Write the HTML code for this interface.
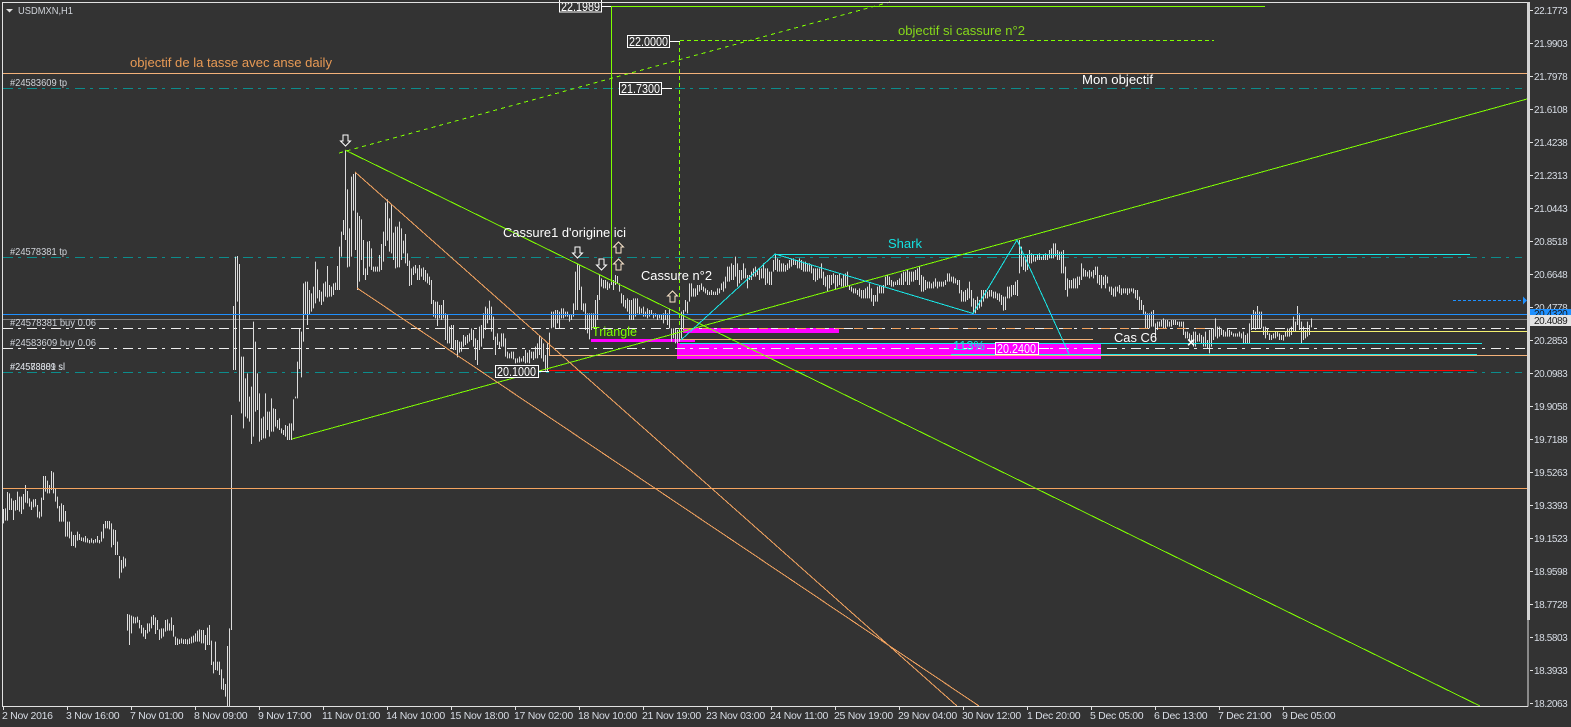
<!DOCTYPE html>
<html lang="fr"><head><meta charset="utf-8"><title>USDMXN,H1</title>
<style>
html,body{margin:0;padding:0;background:#333;width:1571px;height:727px;overflow:hidden}
svg{display:block;font-family:"Liberation Sans",sans-serif}
.a{font-size:10px;letter-spacing:-.4px;fill:#d8dde5}
.t{font-size:10.5px;letter-spacing:-.3px;fill:#d8dde5}
.l{font-size:10.5px;fill:#d0d4da}
.w{font-size:13px;fill:#fff}
</style></head><body>
<svg width="1571" height="727" viewBox="0 0 1571 727" xmlns="http://www.w3.org/2000/svg">
<defs>
<path id="d" d="M-2.5 0H2.5V6H5L0 11L-5 6H-2.5Z" fill="none" stroke-width="1"/>
<path id="u" d="M-2.5 11H2.5V5H5L0 0L-5 5H-2.5Z" fill="none" stroke-width="1"/>
</defs>
<rect width="1571" height="727" fill="#333"/>

<!-- horizontal levels under the bars -->
<g fill="none" shape-rendering="crispEdges">
<path d="M3 88.5H1522M3 257.5H1522M3 372.5H1522" stroke="#0c8c8c" stroke-dasharray="10 5 3 6"/>
<path d="M3 319.5H1527" stroke="#808080"/>
</g>

<!-- magenta rectangles -->
<g fill="#ff00ff" shape-rendering="crispEdges">
<rect x="683" y="328" width="156" height="5"/>
<rect x="591" y="339" width="104" height="3"/>
<rect x="677" y="343" width="424" height="16"/>
</g>

<!-- price bars -->
<g fill="none" stroke="#dcdcdc" stroke-width="1" shape-rendering="crispEdges">
<path transform="translate(.5 460) scale(1 .33333)" d="M3 147V190M5 145V182M7 96V182M9 100V150M11 115V150M13 122V180M15 120V152M17 95V150M19 110V155M21 110V162M23 102V148M25 75V128M27 93V130M29 115V140M31 125V150M33 118V142M35 117V140M37 135V172M39 155V175M41 113V170M43 48V120M45 48V95M47 62V100M49 75V100M51 33V90M53 37V100M55 85V125M57 110V145M59 138V185M61 130V185M63 135V185M65 153V230M67 185V230M69 185V235M71 215V258M73 225V258M75 225V263M77 215V242M79 222V240M81 232V243M83 233V245M85 228V247M87 235V248M89 240V250M91 235V248M93 240V250M95 237V248M97 228V248M99 240V250M101 215V245M103 192V235M105 183V205M107 183V205M109 183V208M111 190V262M113 208V255M115 210V285M117 245V285M119 288V355M121 300V338M123 290V325M125 295V320M127 462V512M129 464V555M131 467V520M133 470V490M135 472V490M137 470V488M139 480V505M141 495V520M143 503V530M145 510V537M147 490V520M149 490V515M151 470V505M153 465V495M155 472V522M157 480V510M159 508V540M161 505V535M163 505V530M165 480V515M167 478V512M169 490V512M171 472V512M173 495V530M175 530V555M177 535V555M179 538V552M181 535V550M183 538V552M185 537V552M187 538V553M189 535V552M191 530V550M193 527V548M195 520V545M197 512V545M199 508V545M201 510V550M203 510V550M205 525V570M207 503V555M209 495V555M211 542V615M213 605V640M215 545V630M217 605V632M219 605V645M221 628V688M223 655V690M225 672V710M227 558V740M229 505V740M231 -135V510"/>
<path transform="translate(.5 240) scale(1 .33333)" d="M233 198V390M235 50V390M237 48V185M239 72V485M241 350V520M243 350V565M245 415V530M247 400V535M249 470V545M251 440V612M253 245V590M255 305V515M257 400V510M259 460V605M261 535V600M263 530V595M265 460V595M267 515V570M269 515V590M271 475V575M273 505V575M275 507V560M277 540V565M279 535V570M281 565V580M283 570V585M285 555V590M287 558V600M289 550V600M291 550V600M293 478V572M295 470V475M297 365V475M299 265V387M301 275V412M303 130V305M305 125V225M307 125V255M309 150V225M311 160V215M313 140V205M315 65V190M317 88V175M319 150V185M321 155V195M323 130V185M325 125V170M327 78V172M329 135V170M331 140V170M333 130V165M335 128V150M337 78V150M339 20V150"/>
<path transform="translate(.5 160) scale(1 .33333)" d="M341 215V290M343 180V225M345 -30V240M347 88V322M349 205V320M351 50V290M353 42V152M355 37V270M357 158V390M359 168V365M361 178V300M363 240V345M365 325V360M367 245V345M369 243V320M371 265V330M373 320V335M375 320V335M377 320V335M379 285V335M381 252V330M383 215V305M385 128V258M387 118V242M389 175V275M391 132V280M393 218V300M395 200V325M397 200V322M399 185V322M401 205V300M403 242V280M405 222V310M407 280V318M409 302V378M411 325V375M413 320V345M415 315V340M417 325V360M419 315V360M421 325V350M423 322V360"/>
<path transform="translate(.5 170) scale(1 .33333)" d="M425 300V335M427 310V340M429 320V345M431 330V402M433 390V440M435 395V445M437 395V468M439 405V445M441 405V450M443 390V445M445 430V510M447 435V520M449 470V520M451 465V535M453 465V540M455 510V540M457 510V562M459 515V548M461 515V545M463 495V530M465 500V525M467 495V520M469 490V515M471 475V510M473 480V530M475 505V570M477 510V585M479 470V540M481 465V530M483 430V505M485 410V480M487 415V460M489 392V450M491 410V485M493 440V510M495 500V555M497 490V525M499 515V535M501 490V530M503 490V530M505 505V560M507 545V565M509 550V565M511 545V565M513 545V568M515 565V580M517 565V578M519 560V578M521 565V575M523 558V575M525 540V580M527 548V578M529 540V580M531 545V565M533 545V570M535 530V565M537 520V565M539 495V555M541 505V565M543 520V575M545 555V602M547 520V605M549 488V555"/>
<path transform="translate(.5 220) scale(1 .33333)" d="M551 275V325M553 275V322M555 270V325M557 270V310M559 275V325M561 265V295M563 265V295M565 275V290M567 275V290M569 285V305M571 285V300M573 250V290M575 155V270M577 130V270M579 135V210M581 200V270M583 250V275M585 250V330M587 280V340M589 280V358M591 280V330M593 280V325M595 240V325M597 225V300M599 165V240M601 175V200M603 180V205M605 180V205M607 185V210M609 190V205M611 180V195M613 180V210M615 165V195M617 168V190M619 190V215M621 220V250M623 225V260M625 240V265M627 235V275M629 240V300M631 240V300M633 235V300M635 235V290M637 235V280M639 260V285M641 265V280M643 260V290M645 275V290M647 265V295M649 270V290M651 270V285M653 280V295M655 280V290M657 285V300M659 285V295M661 285V300M663 280V310M665 270V300M667 280V315M669 265V325M671 325V365M673 325V355M675 325V370M677 330V370M679 325V365M681 275V355M683 270V330M685 240V275M687 245V280M689 190V245M691 190V230M693 205V230M695 205V230M697 195V225M699 195V215M701 190V210M703 200V215M705 205V220M707 210V225M709 215V225M711 210V225M713 215V225M715 215V225M717 205V225M719 205V220M721 190V210M723 185V215M725 170V205M727 140V185M729 140V185M731 130V180M733 135V180M735 110V170M737 130V200M739 150V190M741 150V180M743 130V175M745 145V175M747 165V205M749 165V180M751 155V180M753 145V170M755 140V170M757 150V165M759 145V180M761 145V175M763 130V175M765 145V195M767 145V190M769 155V195M771 155V195M773 120V155"/>
<path transform="translate(.5 230) scale(1 .33333)" d="M775 75V120M777 85V125M779 90V125M781 100V125M783 100V125M785 105V125M787 100V120M789 90V115M791 85V110M793 85V105M795 90V105M797 90V115M799 85V115M801 90V120M803 95V125M805 95V125M807 100V125M809 100V125M811 105V130M813 115V150M815 115V155M817 115V150M819 115V145M821 100V145M823 125V165M825 140V170M827 135V185M829 135V175M831 135V165M833 130V160M835 135V180M837 135V170M839 130V165M841 145V170M843 135V170M845 130V170M847 125V170M849 165V180M851 170V185M853 175V190M855 175V190M857 180V195M859 175V200M861 180V205M863 180V205M865 175V205M867 170V205M869 160V205M871 175V215M873 195V228M875 195V215M877 170V215M879 165V190M881 170V190M883 165V190M885 140V170M887 135V165M889 140V165M891 150V170M893 155V170M895 155V165M897 150V165M899 145V165M901 130V165M903 125V165M905 125V155M907 120V165M909 125V165M911 125V155M913 125V155M915 120V150M917 115V150M919 110V165M921 135V185M923 140V185M925 150V180M927 155V175M929 155V175M931 160V175M933 155V175M935 145V170M937 155V175M939 155V170M941 155V170M943 155V170M945 150V165M947 130V155M949 130V155M951 140V155M953 140V160M955 145V160M957 150V165M959 150V190M961 180V215M963 185V215M965 180V215M967 175V210M969 155V205M971 180V230M973 205V250M975 210V250M977 200V240M979 210V235M981 180V230M983 180V215M985 180V205M987 185V205M989 180V200M991 180V200M993 185V205M995 185V205M997 190V210M999 190V215M1001 195V225"/>
<path transform="translate(.5 220) scale(1 .33333)" d="M1003 230V272M1005 230V270M1007 200V235M1009 200V235M1011 195V230M1013 195V225M1015 185V225M1017 180V228M1019 60V160M1021 80V140M1023 110V150M1025 110V155M1027 105V150M1029 90V130M1031 100V130M1033 105V125M1035 110V125M1037 105V120M1039 100V120M1041 110V120M1043 105V120M1045 100V120M1047 105V120M1049 90V115M1051 85V115M1053 70V115M1055 70V110M1057 90V120M1059 95V120M1061 95V160M1063 90V160M1065 140V210M1067 175V230M1069 180V205M1071 180V205M1073 175V205M1075 175V205M1077 170V205M1079 170V195M1081 130V180M1083 145V170M1085 150V170M1087 155V170M1089 150V175M1091 155V170M1093 150V175M1095 140V165M1097 140V190M1099 165V195M1101 165V205M1103 170V195M1105 165V205M1107 170V190M1109 200V215M1111 200V225M1113 205V230M1115 200V230M1117 200V215M1119 195V220M1121 205V225M1123 205V220M1125 205V220M1127 205V225M1129 205V220M1131 205V215M1133 205V220M1135 210V235M1137 210V240M1139 230V270M1141 240V270M1143 255V285M1145 275V325M1147 280V325M1149 280V325M1151 275V320M1153 270V320M1155 310V355M1157 305V330M1159 305V320M1161 300V320M1163 295V325M1165 300V325M1167 300V320M1169 305V320M1171 300V320M1173 300V315M1175 300V315M1177 305V315M1179 305V320M1181 305V320M1183 305V345M1185 335V355M1187 335V355M1189 340V360M1191 345V370M1193 335V380M1195 335V380M1197 345V365M1199 340V365M1201 345V370M1203 350V380M1205 335V380M1207 360V385M1209 330V400M1211 325V380M1213 325V360M1215 295V350M1217 320V355M1219 320V350M1221 325V345M1223 330V350M1225 335V350M1227 325V350M1229 330V350M1231 335V345M1233 340V350M1235 340V350M1237 340V350M1239 335V350M1241 340V355M1243 335V370M1245 345V370M1247 340V370M1249 310V370M1251 285V330M1253 270V325M1255 275V330M1257 258V325M1259 275V325M1261 275V325M1263 320V345M1265 320V355M1267 325V345M1269 340V360M1271 345V360M1273 340V355M1275 335V355M1277 335V350M1279 340V360M1281 345V360M1283 345V362M1285 335V350M1287 325V350M1289 325V350M1291 320V345M1293 290V335M1295 305V335M1297 258V315M1299 280V330M1301 305V370M1303 320V360M1305 330V355M1307 305V350M1309 315V345M1311 295V322"/>
</g>

<!-- horizontal levels above the bars -->
<g fill="none" shape-rendering="crispEdges">
<path d="M3 73.5H1527" stroke="#f4b27a"/>
<path d="M3 488.5H1527" stroke="#f4a460"/>
<path d="M3 314.5H1527" stroke="#1e90ff"/>
<path d="M3 328.5H1527M3 348.5H1527" stroke="#efefef" stroke-dasharray="10 5 3 6"/>
<path d="M683 328.5H1215" stroke="#f4a460" stroke-dasharray="9 10"/>
<path d="M680 339.5H1093M549 355.5H1527M549.5 340V355" stroke="#f4b27a"/>
<path d="M549 370.5H1474" stroke="#ff0000"/>
<path d="M775 254.5H1470" stroke="#18e8e8"/>
<path d="M680 343.5H1482" stroke="#18e8e8"/>
<path d="M951 354.5H1477" stroke="#18e8e8"/>
<path d="M1251 331.5H1527" stroke="#f4f070"/>
<path d="M1453 300.5H1523" stroke="#1e90ff" stroke-dasharray="3 2"/>
<path d="M611 6.5H1265" stroke="#7fff00"/>
<path d="M611.5 6V282" stroke="#7fff00"/>
<path d="M680 40.5H1214" stroke="#7fff00" stroke-dasharray="4 3"/>
<path d="M679.5 41V330" stroke="#7fff00" stroke-dasharray="4 3"/>
</g>
<path d="M1523 296.5L1527 300.5L1523 304.5Z" fill="#1e90ff"/>

<!-- trend lines -->
<g fill="none" shape-rendering="crispEdges">
<path d="M345 150L1480 706" stroke="#7fff00"/>
<path d="M292 439L1527 99" stroke="#7fff00"/>
<path d="M339 153L890 2" stroke="#7fff00" stroke-dasharray="4 4"/>
<path d="M355 172L957 706" stroke="#f4a460"/>
<path d="M357 288L979 706" stroke="#f4a460"/>
<path d="M681 340L775 254L973 313.5L1017 240L1069 354" stroke="#18e8e8"/>
</g>

<!-- arrows -->
<g stroke="#fff">
<use href="#d" x="345.5" y="135"/>
<use href="#d" x="577.5" y="247"/>
<use href="#d" x="601.5" y="259"/>
</g>
<g stroke="#fbe6cc">
<use href="#u" x="618.5" y="242"/>
<use href="#u" x="618.5" y="259"/>
<use href="#u" x="672.5" y="291"/>
</g>

<!-- labelled boxes -->
<g fill="#333" stroke="#fff" shape-rendering="crispEdges">
<rect x="559.5" y="-1" width="42" height="13"/>
<rect x="627.5" y="35.5" width="42" height="12"/>
<rect x="619.5" y="82.5" width="42" height="12"/>
<rect x="495.5" y="365.5" width="43" height="12"/>
<rect x="995.5" y="342.5" width="43" height="12" fill="#ff00ff"/>
<path d="M601 6.5H611M669 41.5H680M661 88.5H672M538 371.5H549M1038 348.5H1049" fill="none"/>
</g>
<g class="w">
<text class="w" x="561" y="11" textLength="39" lengthAdjust="spacingAndGlyphs">22.1989</text>
<text class="w" x="629" y="46" textLength="39" lengthAdjust="spacingAndGlyphs">22.0000</text>
<text class="w" x="621" y="93" textLength="39" lengthAdjust="spacingAndGlyphs">21.7300</text>
<text class="w" x="497" y="376" textLength="39" lengthAdjust="spacingAndGlyphs">20.1000</text>
<text class="w" x="997" y="353" textLength="39" lengthAdjust="spacingAndGlyphs">20.2400</text>
</g>

<!-- annotations -->
<text x="130" y="67" font-size="13" fill="#e89a55" textLength="202" lengthAdjust="spacingAndGlyphs">objectif de la tasse avec anse daily</text>
<text x="898" y="35" font-size="13" fill="#86d81a" textLength="127" lengthAdjust="spacingAndGlyphs">objectif si cassure n°2</text>
<text x="1082" y="84" font-size="13" fill="#fff" textLength="71" lengthAdjust="spacingAndGlyphs">Mon objectif</text>
<text x="503" y="237" font-size="13" fill="#fff" textLength="123" lengthAdjust="spacingAndGlyphs">Cassure1 d'origine ici</text>
<text x="641" y="280" font-size="13" fill="#fff" textLength="71" lengthAdjust="spacingAndGlyphs">Cassure n°2</text>
<text x="888" y="248" font-size="13" fill="#14e0e0" textLength="34" lengthAdjust="spacingAndGlyphs">Shark</text>
<text x="592" y="336" font-size="13" fill="#7fff00" textLength="45" lengthAdjust="spacingAndGlyphs">Triangle</text>
<text x="953" y="350" font-size="13" fill="#14e0e0" textLength="32" lengthAdjust="spacingAndGlyphs">113%</text>
<text x="1114" y="342" font-size="13" fill="#fff" textLength="43" lengthAdjust="spacingAndGlyphs">Cas C6</text>
<text x="1187" y="347" font-size="14" font-weight="700" fill="#fff">×</text>

<!-- order labels -->
<text class="l" x="10" y="86" textLength="57" lengthAdjust="spacingAndGlyphs">#24583609 tp</text>
<text class="l" x="10" y="255" textLength="57" lengthAdjust="spacingAndGlyphs">#24578381 tp</text>
<text class="l" x="10" y="326" textLength="86" lengthAdjust="spacingAndGlyphs">#24578381 buy 0.06</text>
<text class="l" x="10" y="346" textLength="86" lengthAdjust="spacingAndGlyphs">#24583609 buy 0.06</text>
<text class="l" x="10" y="370" textLength="55" lengthAdjust="spacingAndGlyphs">#24578381 sl</text>
<text class="l" x="10" y="370" textLength="55" lengthAdjust="spacingAndGlyphs">#24583609 sl</text>

<!-- title -->
<path d="M6 9H13L9.5 12.5Z" fill="#e0e0e0"/>
<text class="l" x="18" y="14" textLength="55" lengthAdjust="spacingAndGlyphs">USDMXN,H1</text>

<!-- frame -->
<g fill="none" stroke="#e2e2e2" shape-rendering="crispEdges">
<path d="M1528 706.5V2.5H2.5V706.5H1528"/>
<path d="M1530 10.5h3M1530 43.5h3M1530 76.5h3M1530 109.5h3M1530 142.5h3M1530 175.5h3M1530 208.5h3M1530 241.5h3M1530 274.5h3M1530 307.5h3M1530 340.5h3M1530 373.5h3M1530 406.5h3M1530 439.5h3M1530 472.5h3M1530 505.5h3M1530 538.5h3M1530 571.5h3M1530 604.5h3M1530 637.5h3M1530 670.5h3M1530 703.5h3"/>
<path d="M3.5 707v3M67.5 707v3M131.5 707v3M195.5 707v3M259.5 707v3M323.5 707v3M387.5 707v3M451.5 707v3M515.5 707v3M579.5 707v3M643.5 707v3M707.5 707v3M771.5 707v3M835.5 707v3M899.5 707v3M963.5 707v3M1027.5 707v3M1091.5 707v3M1155.5 707v3M1219.5 707v3M1283.5 707v3"/>
</g>
<rect x="1527" y="2" width="3" height="618" fill="#d4d4d4"/>

<!-- price axis -->
<g>
<text class="a" x="1534" y="14">22.1773</text>
<text class="a" x="1534" y="47">21.9903</text>
<text class="a" x="1534" y="80">21.7978</text>
<text class="a" x="1534" y="113">21.6108</text>
<text class="a" x="1534" y="146">21.4238</text>
<text class="a" x="1534" y="179">21.2313</text>
<text class="a" x="1534" y="212">21.0443</text>
<text class="a" x="1534" y="245">20.8518</text>
<text class="a" x="1534" y="278">20.6648</text>
<text class="a" x="1534" y="311">20.4778</text>
<text class="a" x="1534" y="344">20.2853</text>
<text class="a" x="1534" y="377">20.0983</text>
<text class="a" x="1534" y="410">19.9058</text>
<text class="a" x="1534" y="443">19.7188</text>
<text class="a" x="1534" y="476">19.5263</text>
<text class="a" x="1534" y="509">19.3393</text>
<text class="a" x="1534" y="542">19.1523</text>
<text class="a" x="1534" y="575">18.9598</text>
<text class="a" x="1534" y="608">18.7728</text>
<text class="a" x="1534" y="641">18.5803</text>
<text class="a" x="1534" y="674">18.3933</text>
<text class="a" x="1534" y="707">18.2063</text>
</g>
<rect x="1530" y="309" width="41" height="6" fill="#1e90ff"/>
<text class="a" x="1534" y="317" style="fill:#1a1a1a">20.4320</text>
<rect x="1530" y="315" width="41" height="11" fill="#e2e2e2"/>
<text class="a" x="1534" y="324" style="fill:#1a1a1a">20.4089</text>

<!-- time axis -->
<g>
<text class="t" x="2" y="719">2 Nov 2016</text>
<text class="t" x="66" y="719">3 Nov 16:00</text>
<text class="t" x="130" y="719">7 Nov 01:00</text>
<text class="t" x="194" y="719">8 Nov 09:00</text>
<text class="t" x="258" y="719">9 Nov 17:00</text>
<text class="t" x="322" y="719">11 Nov 01:00</text>
<text class="t" x="386" y="719">14 Nov 10:00</text>
<text class="t" x="450" y="719">15 Nov 18:00</text>
<text class="t" x="514" y="719">17 Nov 02:00</text>
<text class="t" x="578" y="719">18 Nov 10:00</text>
<text class="t" x="642" y="719">21 Nov 19:00</text>
<text class="t" x="706" y="719">23 Nov 03:00</text>
<text class="t" x="770" y="719">24 Nov 11:00</text>
<text class="t" x="834" y="719">25 Nov 19:00</text>
<text class="t" x="898" y="719">29 Nov 04:00</text>
<text class="t" x="962" y="719">30 Nov 12:00</text>
<text class="t" x="1027" y="719">1 Dec 20:00</text>
<text class="t" x="1090" y="719">5 Dec 05:00</text>
<text class="t" x="1154" y="719">6 Dec 13:00</text>
<text class="t" x="1218" y="719">7 Dec 21:00</text>
<text class="t" x="1282" y="719">9 Dec 05:00</text>
</g>
</svg>
</body></html>
